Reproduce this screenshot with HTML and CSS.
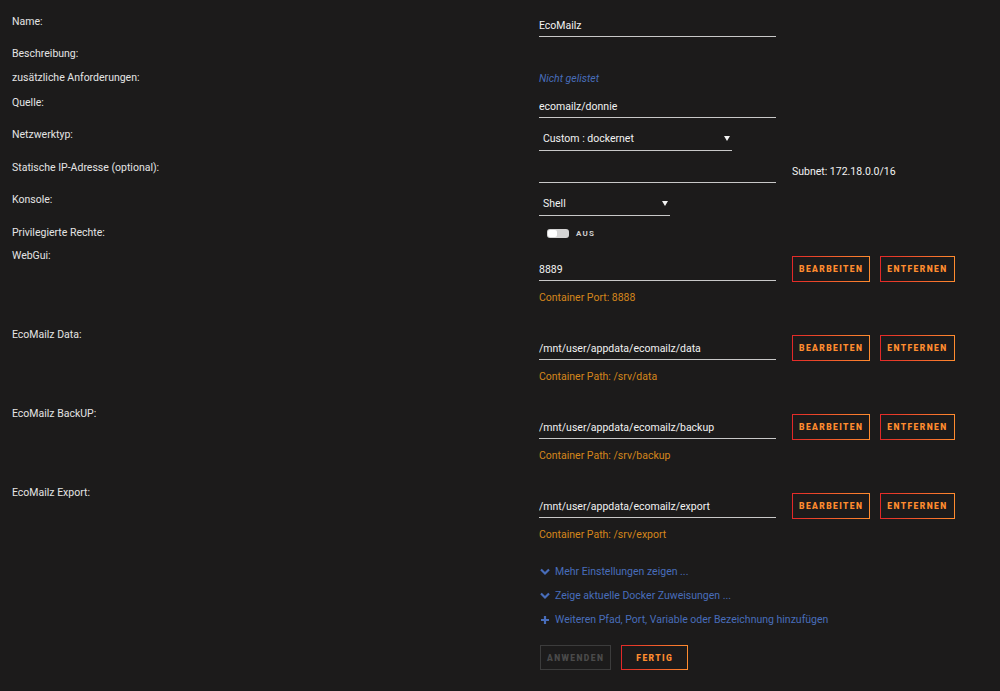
FILE: index.html
```html
<!DOCTYPE html>
<html lang="de">
<head>
    <meta charset="UTF-8">
    <meta name="viewport" content="width=device-width, initial-scale=1.0">
    <title>Docker Container bearbeiten</title>
    <link rel="stylesheet" href="styles.css">
</head>
<body>
    <form class="template">
        <div class="row">
            <div class="label">Name:</div>
            <div class="value"><input class="field" type="text" value="EcoMailz"></div>
        </div>
        <div class="row">
            <div class="label">Beschreibung:</div>
            <div class="value"></div>
        </div>
        <div class="row">
            <div class="label">zusätzliche Anforderungen:</div>
            <div class="value"><span class="unlisted">Nicht gelistet</span></div>
        </div>
        <div class="row">
            <div class="label">Quelle:</div>
            <div class="value"><input class="field" type="text" value="ecomailz/donnie"></div>
        </div>
        <div class="row">
            <div class="label">Netzwerktyp:</div>
            <div class="value">
                <div class="select net">
                    <span>Custom : dockernet</span>
                    <svg class="caret" width="6" height="5" viewBox="0 0 6 5"><path d="M0 0h6L3 5z" fill="#f2f2f2"/></svg>
                </div>
            </div>
        </div>
        <div class="row">
            <div class="label">Statische IP-Adresse (optional):</div>
            <div class="value inline">
                <input class="field" type="text" value="">
                <span class="note">Subnet: 172.18.0.0/16</span>
            </div>
        </div>
        <div class="row">
            <div class="label">Konsole:</div>
            <div class="value">
                <div class="select shell">
                    <span>Shell</span>
                    <svg class="caret" width="6" height="5" viewBox="0 0 6 5"><path d="M0 0h6L3 5z" fill="#f2f2f2"/></svg>
                </div>
            </div>
        </div>
        <div class="row privileged">
            <div class="label">Privilegierte Rechte:</div>
            <div class="value">
                <div class="switch">
                    <span class="track"><span class="knob"></span></span>
                    <span class="switch-text">AUS</span>
                </div>
            </div>
        </div>

        <div class="row config">
            <div class="label">WebGui:</div>
            <div class="value">
                <div class="config-line">
                    <input class="field" type="text" value="8889">
                    <button type="button" class="btn">Bearbeiten</button>
                    <button type="button" class="btn">Entfernen</button>
                </div>
                <div class="target">Container Port: 8888</div>
            </div>
        </div>
        <div class="row config">
            <div class="label">EcoMailz Data:</div>
            <div class="value">
                <div class="config-line">
                    <input class="field" type="text" value="/mnt/user/appdata/ecomailz/data">
                    <button type="button" class="btn">Bearbeiten</button>
                    <button type="button" class="btn">Entfernen</button>
                </div>
                <div class="target">Container Path: /srv/data</div>
            </div>
        </div>
        <div class="row config">
            <div class="label">EcoMailz BackUP:</div>
            <div class="value">
                <div class="config-line">
                    <input class="field" type="text" value="/mnt/user/appdata/ecomailz/backup">
                    <button type="button" class="btn">Bearbeiten</button>
                    <button type="button" class="btn">Entfernen</button>
                </div>
                <div class="target">Container Path: /srv/backup</div>
            </div>
        </div>
        <div class="row config">
            <div class="label">EcoMailz Export:</div>
            <div class="value">
                <div class="config-line">
                    <input class="field" type="text" value="/mnt/user/appdata/ecomailz/export">
                    <button type="button" class="btn">Bearbeiten</button>
                    <button type="button" class="btn">Entfernen</button>
                </div>
                <div class="target">Container Path: /srv/export</div>
            </div>
        </div>

        <div class="row">
            <div class="label"></div>
            <div class="value">
                <div class="links">
                    <a href="#" class="link">
                        <svg width="10" height="8" viewBox="0 0 10 8"><path d="M1 1.5l4 4 4-4" fill="none" stroke="#486dba" stroke-width="2.2"/></svg>
                        Mehr Einstellungen zeigen ...
                    </a>
                    <a href="#" class="link">
                        <svg width="10" height="8" viewBox="0 0 10 8"><path d="M1 1.5l4 4 4-4" fill="none" stroke="#486dba" stroke-width="2.2"/></svg>
                        Zeige aktuelle Docker Zuweisungen ...
                    </a>
                    <a href="#" class="link">
                        <svg width="10" height="10" viewBox="0 0 10 10"><path d="M5 1v8M1 5h8" fill="none" stroke="#486dba" stroke-width="2.2"/></svg>
                        Weiteren Pfad, Port, Variable oder Bezeichnung hinzufügen
                    </a>
                </div>
                <div class="actions">
                    <button type="button" class="btn" disabled>Anwenden</button>
                    <button type="button" class="btn">Fertig</button>
                </div>
            </div>
        </div>
    </form>
</body>
</html>
```

FILE: styles.css
```css
:root {
    --bg-color: #1c1b1b;
    --text-color: #e4e4e4;
    --line-color: #c8c8c8;
    --orange: #ff8c2f;
    --red: #e22828;
    --amber: #d4861b;
    --blue: #486dba;
}

body {
    margin: 0;
    background-color: var(--bg-color);
    color: var(--text-color);
    font-family: Roboto, "Open Sans", sans-serif;
    font-size: 10.5px;
}

.template {
    padding: 14px 0 0 12px;
}

.row {
    display: flex;
    align-items: flex-start;
    margin-bottom: 9px;
}

.row.privileged {
    margin-bottom: 7px;
}

.label {
    width: 527px;
    flex-shrink: 0;
    line-height: 15px;
}

.value {
    flex: 1;
    line-height: 15px;
}

.value.inline {
    display: flex;
    align-items: center;
    gap: 16px;
}

.field {
    width: 237px;
    height: 23px;
    box-sizing: border-box;
    padding: 0;
    border: none;
    border-bottom: 1px solid var(--line-color);
    background: transparent;
    color: #f2f2f2;
    font-family: Roboto, "Open Sans", sans-serif;
    font-size: 10.5px;
    outline: none;
    display: block;
}

.unlisted {
    color: var(--blue);
    font-style: italic;
    display: block;
    padding-top: 1px;
}

.select {
    height: 24px;
    box-sizing: border-box;
    border-bottom: 1px solid var(--line-color);
    display: flex;
    align-items: center;
    justify-content: space-between;
    padding: 0 2px 0 4px;
    color: #f2f2f2;
}

.select.net {
    width: 193px;
}

.select.shell {
    width: 131px;
}

.caret {
    margin-top: -1px;
}

.note {
    color: #f2f2f2;
}

.switch {
    display: flex;
    align-items: center;
    gap: 7px;
    margin-left: 8px;
    padding-top: 1px;
}

.track {
    width: 22px;
    height: 9px;
    border-radius: 3px;
    background-color: #d4d4d4;
    display: flex;
    align-items: center;
    padding-left: 1px;
    box-sizing: border-box;
}

.knob {
    width: 9px;
    height: 7px;
    border-radius: 2px;
    background-color: #ffffff;
}

.switch-text {
    font-size: 8px;
    letter-spacing: 1.2px;
    color: #cfcfcf;
    font-weight: bold;
}

.row.config {
    min-height: 70px;
}

.config .value {
    padding-top: 8px;
}

.config-line {
    display: flex;
    align-items: flex-end;
    gap: 10px;
}

.config-line .field {
    margin-right: 6px;
    margin-bottom: 1px;
}

.target {
    color: var(--amber);
    margin-top: 8px;
}

.btn {
    height: 26px;
    min-width: 67px;
    padding: 0 6px;
    box-sizing: border-box;
    background: transparent;
    border: 1px solid;
    border-image: linear-gradient(90deg, var(--red), var(--orange)) 1;
    color: var(--orange);
    font-family: Roboto, "Open Sans", sans-serif;
    font-size: 8.5px;
    font-weight: 900;
    letter-spacing: 1.4px;
    text-transform: uppercase;
    cursor: pointer;
}

.btn:disabled {
    border-image: none;
    border-color: #3c3c3c;
    color: #4a4a4a;
    cursor: default;
}

.links {
    display: flex;
    flex-direction: column;
    gap: 9px;
    padding-top: 0;
}

.link {
    color: var(--blue);
    text-decoration: none;
    display: flex;
    align-items: center;
    gap: 5px;
    padding-left: 1px;
}

.actions {
    display: flex;
    gap: 10px;
    margin-top: 18px;
    padding-left: 1px;
}

.actions .btn {
    height: 25px;
}
```
